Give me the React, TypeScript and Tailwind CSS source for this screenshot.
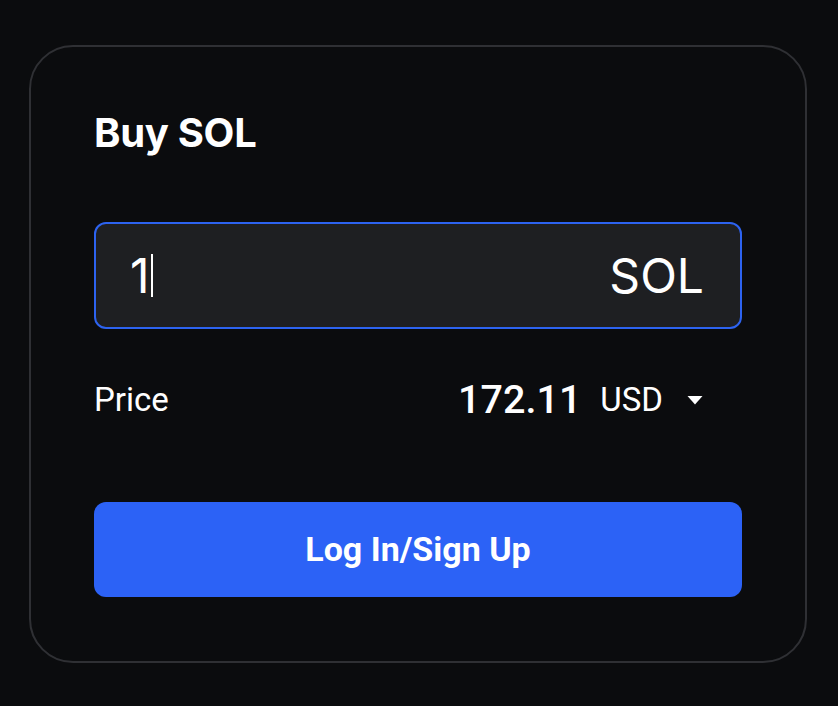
export default function App() {
  return (
    <div className="min-h-screen w-full bg-[#0b0c0e] pl-[29px] pt-[45px]">
      <div className="flex h-[618px] w-[778px] flex-col rounded-[44px] border-2 border-[#2f3034] bg-[#0b0c0e] px-[63px] pt-[66px]">
        <h1 className="h-[40px] font-['Inter',sans-serif] text-[40px] font-bold leading-[40px] tracking-[-0.3px] text-white">
          Buy SOL
        </h1>

        <div className="mt-[69px] flex h-[107px] items-center justify-between rounded-[12px] border-2 border-[#2d63f0] bg-[#1e1f22] pl-[34px] pr-[36px]">
          <div className="flex items-center">
            <span className="font-['Inter',sans-serif] text-[48px] leading-none text-white">1</span>
            <span className="ml-[1px] h-[43px] w-[2px] bg-white" />
          </div>
          <span className="font-['Inter',sans-serif] text-[48px] leading-none text-white">SOL</span>
        </div>

        <div className="mt-[43px] flex h-[56px] items-center justify-between pr-[39px]">
          <span className="font-['Roboto',sans-serif] text-[33px] text-white">Price</span>
          <div className="flex items-center">
            <span className="font-['Roboto',sans-serif] text-[39.5px] font-medium text-white">172.11</span>
            <span className="ml-[19px] font-['Roboto',sans-serif] text-[33px] text-white">USD</span>
            <svg className="ml-[24px]" width="16" height="10" viewBox="0 0 16 10">
              <path d="M0.5 1 L15.5 1 L8 9.5 Z" fill="white" />
            </svg>
          </div>
        </div>

        <button className="mt-[74px] flex h-[95px] w-full items-center justify-center rounded-[12px] bg-[#2c62f6] font-['Roboto',sans-serif] text-[34px] font-bold text-white">
          Log In/Sign Up
        </button>
      </div>
    </div>
  );
}
